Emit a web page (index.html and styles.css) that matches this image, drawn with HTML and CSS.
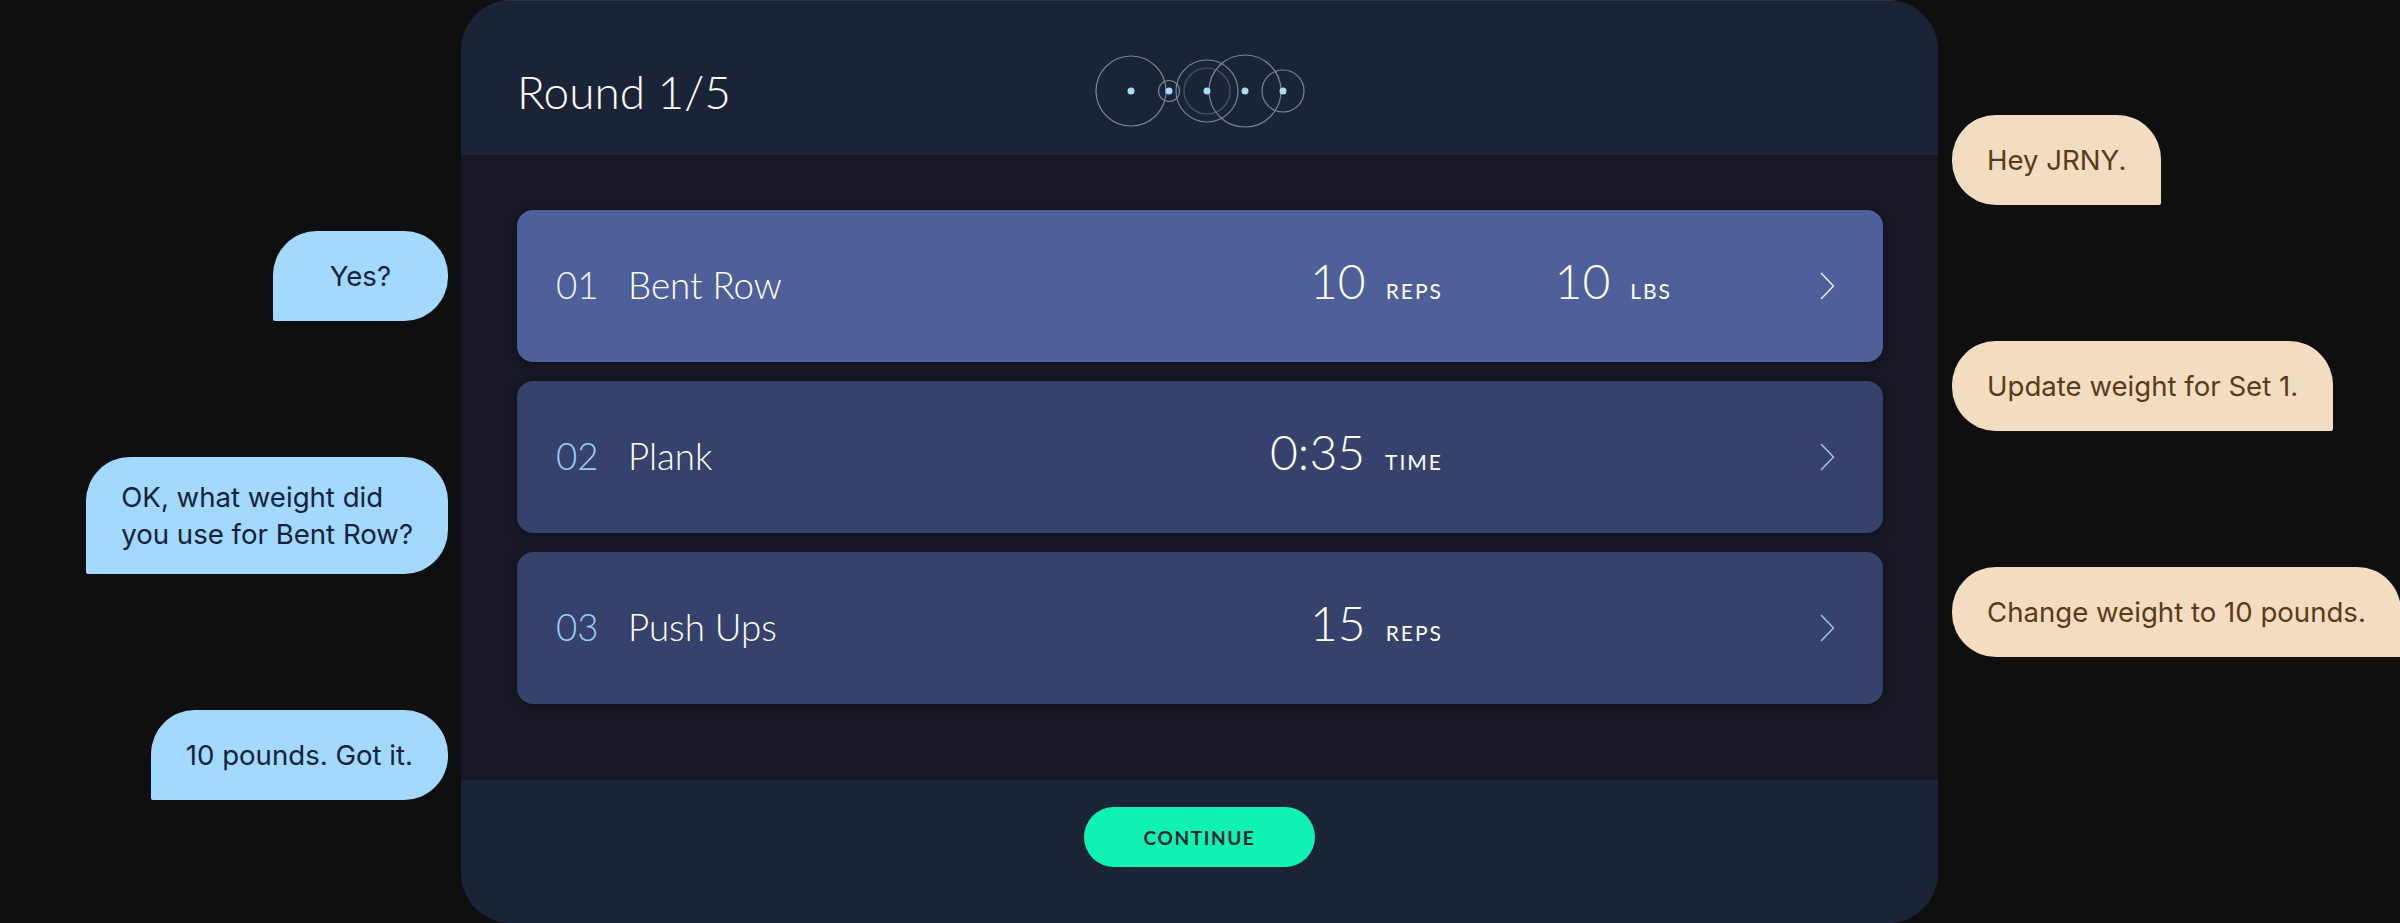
FILE: index.html
```html
<!DOCTYPE html>
<html lang="en">
<head>
    <meta charset="UTF-8">
    <meta name="viewport" content="width=device-width, initial-scale=1.0">
    <title>Round 1/5</title>
    <link rel="stylesheet" href="styles.css">
</head>
<body>
    <!-- Burbujas de la izquierda -->
    <div class="chat chat-left">
        <div class="bubble bubble-blue bubble-short">Yes?</div>
        <div class="bubble bubble-blue">OK, what weight did<br>you use for Bent Row?</div>
        <div class="bubble bubble-blue">10 pounds. Got it.</div>
    </div>

    <div class="panel">
        <header class="panel-header">
            <h1 class="round-title">Round 1/5</h1>
            <svg class="dots" width="240" height="80" viewBox="0 0 240 80">
                <g fill="none" stroke="#71869c" stroke-width="1.2">
                    <circle cx="41" cy="40" r="35"/>
                    <circle cx="79" cy="40" r="10.5"/>
                    <circle cx="117" cy="40" r="31"/>
                    <circle cx="117" cy="40" r="23" stroke="#465569"/>
                    <circle cx="155" cy="40" r="36"/>
                    <circle cx="193" cy="40" r="21"/>
                </g>
                <g fill="#a9dcf6">
                    <circle cx="41" cy="40" r="3.5"/>
                    <circle cx="79" cy="40" r="3.5"/>
                    <circle cx="117" cy="40" r="3.5"/>
                    <circle cx="155" cy="40" r="3.5"/>
                    <circle cx="193" cy="40" r="3.5"/>
                </g>
            </svg>
        </header>

        <main class="panel-body">
            <div class="exercise exercise-active">
                <div class="exercise-main">
                    <span class="exercise-num">01</span>
                    <span class="exercise-name">Bent Row</span>
                    <div class="metric"><span class="metric-value">10</span><span class="metric-unit">REPS</span></div>
                    <div class="metric metric-second"><span class="metric-value">10</span><span class="metric-unit">LBS</span></div>
                </div>
                <svg class="chevron" width="15" height="28" viewBox="0 0 15 28"><path d="M1 1l12.5 13L1 27" fill="none" stroke="currentColor" stroke-width="1.4"/></svg>
            </div>
            <div class="exercise">
                <div class="exercise-main">
                    <span class="exercise-num">02</span>
                    <span class="exercise-name">Plank</span>
                    <div class="metric"><span class="metric-value">0:35</span><span class="metric-unit">TIME</span></div>
                    <div class="metric metric-second"></div>
                </div>
                <svg class="chevron" width="15" height="28" viewBox="0 0 15 28"><path d="M1 1l12.5 13L1 27" fill="none" stroke="currentColor" stroke-width="1.4"/></svg>
            </div>
            <div class="exercise">
                <div class="exercise-main">
                    <span class="exercise-num">03</span>
                    <span class="exercise-name">Push Ups</span>
                    <div class="metric"><span class="metric-value">15</span><span class="metric-unit">REPS</span></div>
                    <div class="metric metric-second"></div>
                </div>
                <svg class="chevron" width="15" height="28" viewBox="0 0 15 28"><path d="M1 1l12.5 13L1 27" fill="none" stroke="currentColor" stroke-width="1.4"/></svg>
            </div>
        </main>

        <footer class="panel-footer">
            <button class="continue-btn">CONTINUE</button>
        </footer>
    </div>

    <!-- Burbujas de la derecha -->
    <div class="chat chat-right">
        <div class="bubble bubble-sand">Hey JRNY.</div>
        <div class="bubble bubble-sand">Update weight for Set 1.</div>
        <div class="bubble bubble-sand">Change weight to 10 pounds.</div>
    </div>
</body>
</html>
```

FILE: styles.css
```css
body {
    margin: 0;
    background-color: #0f0f10;
    font-family: 'Lato', sans-serif;
    display: flex;
    height: 923px;
    overflow: hidden;
}

/* Columnas de chat */
.chat {
    display: flex;
    flex-direction: column;
    gap: 136px;
}
.chat-left {
    width: 461px;
    box-sizing: border-box;
    padding: 231px 13px 0 0;
    align-items: flex-end;
}
.chat-right {
    flex: 1;
    padding: 115px 0 0 14px;
    align-items: flex-start;
    min-width: 0;
}
.bubble {
    box-sizing: border-box;
    display: flex;
    align-items: center;
    min-height: 90px;
    font-family: 'Inter', sans-serif;
    font-size: 27.6px;
    line-height: 36.5px;
    padding: 22px 35px;
    border-radius: 44px;
    white-space: nowrap;
}
.bubble-short {
    padding-left: 57px;
    padding-right: 57px;
}
.bubble-blue {
    background-color: #a3d8ff;
    color: #12233b;
    border-bottom-left-radius: 2px;
}
.bubble-sand {
    background-color: #f2ddc3;
    color: #5b3b17;
    border-bottom-right-radius: 2px;
}

/* Panel central */
.panel {
    width: 1477px;
    flex-shrink: 0;
    height: 923px;
    border-radius: 50px;
    overflow: hidden;
    display: flex;
    flex-direction: column;
    background-color: #181825;
}
.panel-header {
    height: 155px;
    box-sizing: border-box;
    background-color: #1b2437;
    border-top: 1px solid #2b3448;
    display: flex;
    align-items: center;
    padding: 26px 0 0 56px;
}
.round-title {
    margin: 0;
    width: 573px;
    font-size: 46px;
    font-weight: 300;
    color: #ffffff;
}
.panel-body {
    flex: 1;
    padding: 55px 55px 0 56px;
    display: flex;
    flex-direction: column;
    gap: 19px;
}

/* Filas de ejercicios */
.exercise {
    height: 152px;
    border-radius: 16px;
    background-color: #36426c;
    color: #9ccdf2;
    display: flex;
    align-items: center;
    padding: 0 48px 0 39px;
    box-shadow: 0 2px 8px rgba(0, 0, 0, 0.3);
}
.exercise-active {
    background-color: #4f5f99;
    color: #f0f4fb;
}
.exercise-main {
    flex: 1;
    display: flex;
    align-items: baseline;
    padding-right: 148px;
    margin-bottom: 12px;
}
.exercise-num {
    width: 72px;
    font-size: 36.7px;
    font-weight: 300;
}
.exercise-name {
    flex: 1;
    font-size: 36.7px;
    font-weight: 300;
    color: #ffffff;
}
.metric {
    display: flex;
    justify-content: flex-end;
    align-items: baseline;
    gap: 20px;
    color: #ffffff;
}
.metric-second {
    width: 229px;
}
.metric-value {
    font-size: 48px;
    font-weight: 300;
}
.metric-unit {
    font-size: 21px;
    letter-spacing: 2px;
}

/* Pie */
.panel-footer {
    height: 143px;
    background-color: #1b2437;
    display: flex;
    justify-content: center;
    padding-top: 27px;
    box-sizing: border-box;
}
.continue-btn {
    width: 231px;
    height: 60px;
    border: none;
    border-radius: 30px;
    background-color: #10f2b2;
    color: #10262f;
    font-family: 'Lato', sans-serif;
    font-size: 19px;
    font-weight: 700;
    letter-spacing: 1.6px;
}
```
